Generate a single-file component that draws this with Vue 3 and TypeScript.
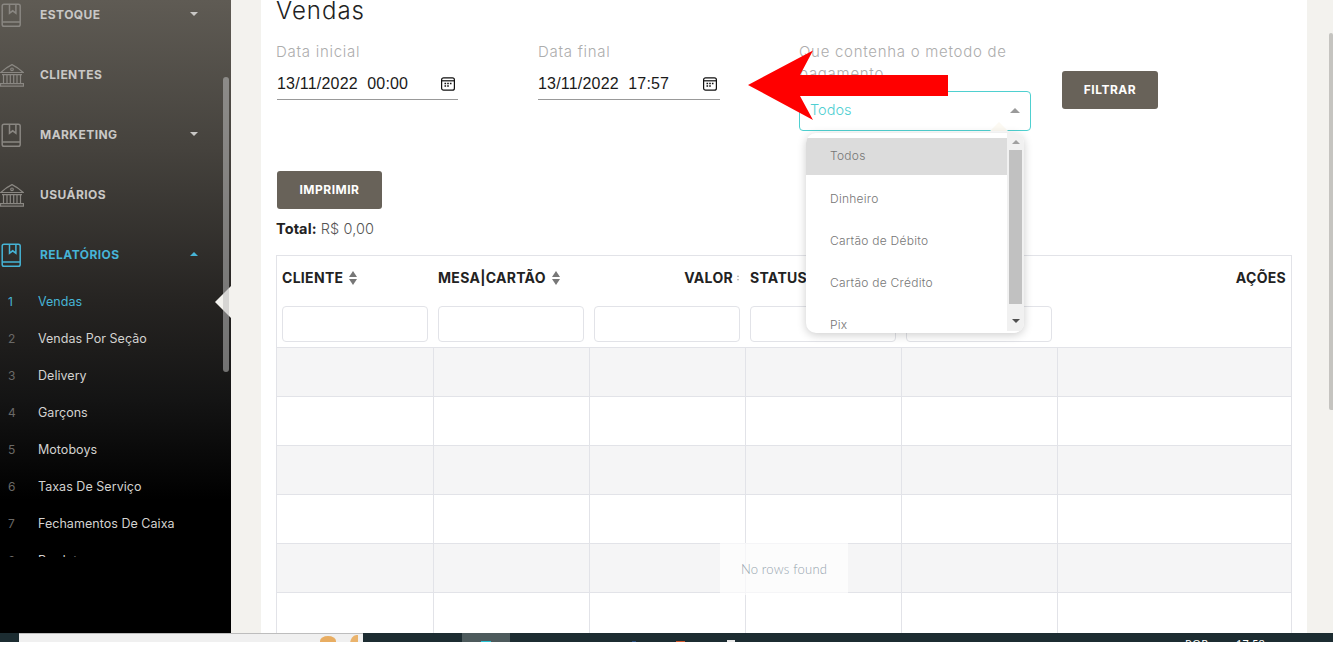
<script setup lang="ts">
interface NavItem { label: string; icon: 'book' | 'bank'; caret?: 'down' | 'up'; active?: boolean }
const nav: NavItem[] = [
  { label: 'ESTOQUE', icon: 'book', caret: 'down' },
  { label: 'CLIENTES', icon: 'bank' },
  { label: 'MARKETING', icon: 'book', caret: 'down' },
  { label: 'USUÁRIOS', icon: 'bank' },
  { label: 'RELATÓRIOS', icon: 'book', caret: 'up', active: true },
]
const subs = ['Vendas', 'Vendas Por Seção', 'Delivery', 'Garçons', 'Motoboys', 'Taxas De Serviço', 'Fechamentos De Caixa', 'Produtos']
const dates = [
  { label: 'Data inicial', value: '13/11/2022  00:00' },
  { label: 'Data final', value: '13/11/2022  17:57' },
]
const options = ['Todos', 'Dinheiro', 'Cartão de Débito', 'Cartão de Crédito', 'Pix']
const rows = [0, 1, 2, 3, 4, 5]
const cols = [0, 1, 2, 3, 4, 5]
</script>

<template>
  <div class="screen">
    <div class="app">
      <aside class="sidebar">
        <div class="menu">
          <div v-for="item in nav" :key="item.label" class="nav-item" :class="{ active: item.active }">
            <svg v-if="item.icon === 'book'" class="nav-icon" viewBox="0 0 24 26" fill="none" stroke="currentColor" stroke-width="1.500">
              <rect x="2.200" y="3.200" width="18" height="22" rx="1.800" />
              <path d="M2.200 21h18" />
              <path d="M9.500 3.200v9l3.200-2.400 3.200 2.400v-9" />
            </svg>
            <svg v-else class="nav-icon" viewBox="0 0 24 26" fill="none" stroke="currentColor" stroke-width="1.200">
              <path d="M.8 11.500C4 8.500 8 5.500 12 3.600c4 1.900 8 4.900 11.200 7.900z" />
              <circle cx="12" cy="8.300" r="1.300" />
              <path d="M3.500 14v8M7 14v8M10.300 14v8M13.700 14v8M17 14v8M20.500 14v8M2 13.700h20" />
              <path d="M.5 22.600h23v2.600H.5z" />
            </svg>
            <span class="nav-label">{{ item.label }}</span>
            <span v-if="item.caret" class="caret" :class="item.caret"></span>
          </div>
          <div class="subs">
            <div v-for="(s, i) in subs" :key="s" class="sub" :class="{ active: i === 0 }">
              <span class="sub-num">{{ i + 1 }}</span>
              <span>{{ s }}</span>
            </div>
          </div>
        </div>
        <div class="notch"></div>
        <div class="side-thumb"></div>
      </aside>

      <main class="main">
        <section class="card">
          <h1 class="title">Vendas</h1>
          <div class="filters">
            <div v-for="d in dates" :key="d.label" class="field date-field">
              <label class="field-label">{{ d.label }}</label>
              <div class="date-input">
                <span class="date-value">{{ d.value }}</span>
                <svg class="cal" viewBox="0 0 14 14" fill="none" stroke="#111" stroke-width="1.200">
                  <rect x=".6" y=".8" width="12.800" height="12.400" rx="2" />
                  <path d="M.6 3.800h12.800" />
                  <path d="M3.500 6.500h1.600M6.200 6.500h1.600M8.900 6.500h1.600M3.500 9h1.600M6.200 9h1.600" stroke-width="1.400" />
                </svg>
              </div>
            </div>
            <div class="field pay-field">
              <label class="field-label">Que contenha o metodo de pagamento</label>
              <div class="select">
                <span class="select-value">Todos</span>
                <span class="select-caret"></span>
                <span class="pip"></span>
                <div class="dropdown">
                  <ul class="options">
                    <li v-for="(o, i) in options" :key="o" :class="{ selected: i === 0 }">{{ o }}</li>
                  </ul>
                  <div class="drop-scroll">
                    <span class="arrow-up"></span>
                    <span class="drop-thumb"></span>
                    <span class="arrow-down"></span>
                  </div>
                </div>
              </div>
            </div>
            <button class="btn filter-btn">FILTRAR</button>
          </div>

          <button class="btn print-btn">IMPRIMIR</button>
          <p class="total"><strong>Total:</strong> R$ 0,00</p>

          <div class="table">
            <div class="thead">
              <div class="th">CLIENTE <span class="sort"></span></div>
              <div class="th">MESA|CARTÃO <span class="sort"></span></div>
              <div class="th right">VALOR <span class="sort tiny"></span></div>
              <div class="th">STATUS</div>
              <div class="th"></div>
              <div class="th right last">AÇÕES</div>
              <div class="tf"><span class="box"></span></div>
              <div class="tf"><span class="box"></span></div>
              <div class="tf"><span class="box"></span></div>
              <div class="tf"><span class="box"></span></div>
              <div class="tf"><span class="box"></span></div>
              <div class="tf"></div>
            </div>
            <div v-for="r in rows" :key="r" class="row" :class="{ odd: r % 2 === 0 }">
              <div v-for="c in cols" :key="c" class="td"></div>
            </div>
            <div class="no-rows">No rows found</div>
          </div>
        </section>
        <div class="page-thumb"></div>
      </main>
    </div>

    <footer class="taskbar">
      <div class="search">
        <span class="doodle one"></span>
        <span class="doodle two"></span>
      </div>
      <div class="tile"><span class="tile-glyph"></span></div>
      <span class="peek blue"></span>
      <span class="peek orange"></span>
      <span class="peek white"></span>
      <span class="tray lang">POR</span>
      <span class="tray clock">17:58</span>
    </footer>

    <svg class="red-arrow" width="210" height="80" viewBox="0 0 210 80">
      <polygon points="0,35 65,0.500 52,25 200,25 200,46 52,46 65,70" fill="#ff0000" />
    </svg>
  </div>
</template>

<style>
html, body { margin: 0; background: #fff; overflow: hidden; }
</style>

<style scoped>
.screen {
  position: relative;
  width: 1343px;
  height: 648px;
  overflow: hidden;
  background: #fff;
  font-family: Inter, "Open Sans", sans-serif;
}
.app { display: flex; width: 1333px; height: 633px; overflow: hidden; }

.sidebar {
  position: relative;
  flex: 0 0 231px;
  background: linear-gradient(180deg, #5f5b54 0, #45423d 150px, #262422 300px, #141414 400px, #000 500px);
}
.menu { margin-top: -16px; height: 573px; overflow: hidden; }
.nav-item {
  display: flex;
  align-items: center;
  height: 60px;
  color: #8a8782;
}
.nav-item.active { color: #46b4d6; }
.nav-icon { width: 24px; height: 26px; flex: none; margin: 0 16px 0 0; }
.nav-label { flex: 1; font-size: 12px; font-weight: 700; letter-spacing: .45px; color: #c9c8c6; }
.nav-item.active .nav-label { color: #46b4d6; }
.caret { margin-right: 33px; border-left: 4px solid transparent; border-right: 4px solid transparent; }
.caret.down { border-top: 4px solid #c9c8c6; }
.caret.up { border-bottom: 4px solid #46b4d6; }
.subs { margin-top: -1px; }
.sub { display: flex; align-items: center; height: 37px; font-size: 12.5px; color: #d3d2d0; letter-spacing: .04px; }
.sub.active { color: #46b4d6; }
.sub-num { flex: 0 0 38px; padding-left: 8px; box-sizing: border-box; color: #6a6967; font-size: 12px; }
.sub.active .sub-num { color: #46b4d6; }
.side-thumb {
  position: absolute; left: 223px; top: 77px; width: 6px; height: 295px;
  border-radius: 3px; background: rgba(190, 190, 190, .55);
}
.notch {
  position: absolute; left: 215px; top: 286px; width: 0; height: 0;
  border-top: 16px solid transparent; border-bottom: 16px solid transparent;
  border-right: 16px solid #f3f2ee;
}

.main { position: relative; flex: 1; min-width: 0; background: #f3f2ee; padding: 0 26px 0 30px; overflow: hidden; }
.card { display: flow-root; height: 633px; background: #fff; padding: 0 15px 0 16px; box-sizing: border-box; }
.title {
  margin: -7px 0 12px -1px;
  font-size: 24px; line-height: 36px; font-weight: 300; color: #222; letter-spacing: 1px;
}
.filters { display: flex; align-items: flex-start; }
.field { display: flex; flex-direction: column; }
.field-label { font-size: 15px; line-height: 22px; color: #adadad; letter-spacing: .72px; font-weight: 300; }
.date-field { width: 182px; margin-right: 79px; }
.date-field:first-child { width: 181px; margin-right: 80px; }
.date-field:first-child .field-label { margin-left: -1px; }
.date-input {
  display: flex; align-items: center; justify-content: space-between;
  height: 37px; box-sizing: border-box; padding: 5px 3px 0 0; border-bottom: 1px solid #999;
}
.date-value { font-family: "Liberation Sans", Arial, sans-serif; font-size: 16px; letter-spacing: .2px; color: #1a1a1a; white-space: pre; }
.cal { width: 14px; height: 14px; }
.pay-field { width: 232px; }
.select {
  position: relative;
  display: flex; align-items: center; justify-content: space-between;
  height: 40px; box-sizing: border-box; margin-top: 6px;
  padding: 0 10px; border: 1px solid #4fd0d0; border-radius: 4px; background: #fff;
  font-size: 14.5px; font-weight: 300; color: #4fcfd2;
}
.select-value { margin-bottom: 3px; }
.select-caret { border-left: 5px solid transparent; border-right: 5px solid transparent; border-bottom: 5px solid #9a9a9a; margin-bottom: 2px; }
.pip {
  position: absolute; right: 22px; bottom: -1px; width: 0; height: 0;
  border-left: 9px solid transparent; border-right: 9px solid transparent; border-bottom: 9px solid #fcf9f2;
}
.dropdown {
  position: absolute; z-index: 5; left: 6px; top: 41px; width: 218px; height: 200px;
  display: flex; overflow: hidden; background: #fff; border-radius: 10px;
  box-shadow: 0 2px 10px rgba(0, 0, 0, .2);
}
.options { flex: 1; margin: 0; padding: 5px 0 0; list-style: none; }
.options li {
  height: 37px; margin-bottom: 5px; padding-left: 24px; line-height: 36px;
  font-size: 12px; color: #767676; letter-spacing: .25px;
}
.options li.selected { background: #dcdcdc; margin-bottom: 6px; }
.drop-scroll {
  position: relative; flex: 0 0 17px; height: 198px; background: #f1f1f1;
  display: flex; flex-direction: column; align-items: center;
}
.arrow-up { margin-top: 7px; border-left: 4px solid transparent; border-right: 4px solid transparent; border-bottom: 4px solid #a0a0a0; }
.drop-thumb { width: 13px; height: 154px; margin-top: 6px; background: #c1c1c1; }
.arrow-down { margin-top: 15px; border-left: 4px solid transparent; border-right: 4px solid transparent; border-top: 4px solid #505050; }

.btn {
  height: 38px; border: 0; border-radius: 3px; background: #686259; color: #fff;
  font-family: inherit; font-size: 12px; font-weight: 700; letter-spacing: .5px; padding: 0 0 2px;
}
.filter-btn { width: 96px; margin: 30px 0 0 31px; }
.print-btn { display: block; width: 105px; margin-top: 40px; }
.total { margin: 10px 0 16px -1px; font-size: 14.5px; line-height: 20px; color: #555; font-weight: 300; letter-spacing: .1px; }
.total strong { color: #222; font-weight: 700; }

.table { position: relative; margin-left: -1px; border: 1px solid #e2e3e8; border-bottom: 0; width: 1016px; box-sizing: border-box; }
.thead { display: grid; grid-template-columns: repeat(5, 156px) 1fr; height: 91px; grid-template-rows: 44px 47px; }
.th {
  display: flex; align-items: center; gap: 6px; padding: 0 5px; box-sizing: border-box; white-space: nowrap;
  font-size: 14px; line-height: 18px; font-weight: 700; color: #222; letter-spacing: .3px;
}
.th.right { justify-content: flex-end; gap: 4px; padding-right: 6px; }
.th.right.last { padding-right: 5px; }
.sort { position: relative; display: inline-block; width: 9px; height: 14px; }
.sort::before, .sort::after {
  content: ""; position: absolute; left: 0;
  border-left: 4.500px solid transparent; border-right: 4.500px solid transparent;
}
.sort::before { top: 0; border-bottom: 6px solid #777; }
.sort::after { bottom: 0; border-top: 6px solid #777; }
.sort.tiny { width: 2px; height: 6px; }
.sort.tiny::before, .sort.tiny::after { border-left-width: 1px; border-right-width: 1px; }
.sort.tiny::before { border-bottom: 2px solid #aaa; }
.sort.tiny::after { border-top: 2px solid #aaa; }
.tf { padding: 6px 5px 0; box-sizing: border-box; }
.box { display: block; width: 146px; height: 36px; box-sizing: border-box; border: 1px solid #e2e3e8; border-radius: 4px; background: #fff; }
.row { display: grid; grid-template-columns: repeat(5, 156px) 1fr; height: 49px; box-sizing: border-box; border-top: 1px solid #e2e3e8; }
.row.odd { background: #f5f5f6; }
.td { border-left: 1px solid #e2e3e8; }
.td:first-child { border-left: 0; }
.no-rows {
  position: absolute; left: 443px; top: 287px; width: 128px; height: 52px;
  display: flex; align-items: center; justify-content: center;
  background: rgba(255, 255, 255, .65);
  font-family: Lato, sans-serif; font-size: 13px; font-weight: 300; color: #94a3ad; letter-spacing: .2px;
}

.page-thumb { position: absolute; right: 0; top: 33px; width: 4px; height: 377px; background: #c5c4c0; border-radius: 2px 2px 0 2px; }

.taskbar {
  position: relative; display: flex; width: 1333px; height: 9px; overflow: hidden; background: #1c2c31;
}
.search {
  position: relative; flex: none; width: 344px; margin-left: 19px; box-sizing: border-box;
  border-top: 1px solid #bdbdbd; background: #f0f0f0;
}
.doodle { position: absolute; top: 2px; border-radius: 50% 50% 0 0; }
.doodle.one { left: 301px; width: 16px; height: 10px; background: #e8ad62; }
.doodle.two { left: 331px; top: 1px; width: 8px; height: 12px; background: #eab36c; border-radius: 80% 0 0 0; }
.tile { position: relative; flex: none; width: 48px; margin-left: 99px; background: #4d5a5c; }
.tile-glyph { position: absolute; left: 19px; bottom: 0; width: 10px; height: 1px; background: #27c3d4; }
.peek { position: absolute; bottom: 0; height: 1px; }
.peek.blue { left: 632px; width: 4px; background: #2a4f80; }
.peek.orange { left: 676px; width: 9px; background: #d4562a; }
.peek.white { left: 727px; width: 8px; height: 2px; background: #e8e8e8; }
.tray { position: absolute; top: 4px; font-family: "Noto Sans", sans-serif; font-size: 11px; line-height: 14px; color: #fff; }
.lang { left: 1185px; letter-spacing: .5px; }
.clock { left: 1236px; letter-spacing: .2px; }

.red-arrow { position: absolute; left: 748px; top: 50px; z-index: 10; }
</style>
